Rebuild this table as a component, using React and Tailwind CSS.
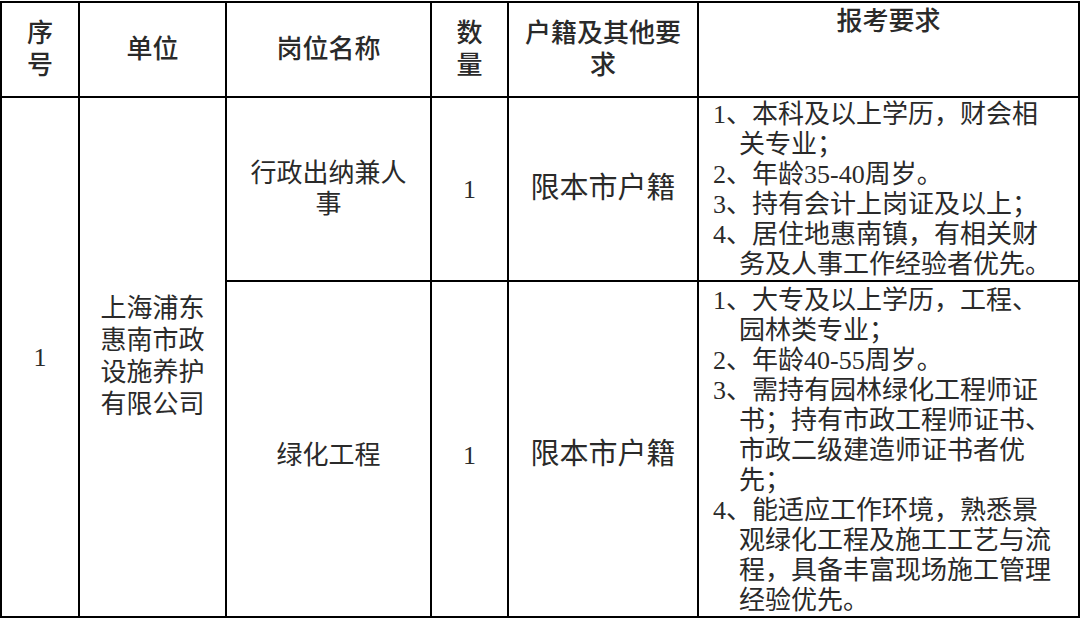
import React from "react";

const req1 = [
  ["1、本科及以上学历，财会相", "关专业；"],
  ["2、年龄35-40周岁。"],
  ["3、持有会计上岗证及以上；"],
  ["4、居住地惠南镇，有相关财", "务及人事工作经验者优先。"],
];

const req2 = [
  ["1、大专及以上学历，工程、", "园林类专业；"],
  ["2、年龄40-55周岁。"],
  ["3、需持有园林绿化工程师证", "书；持有市政工程师证书、", "市政二级建造师证书者优", "先；"],
  ["4、能适应工作环境，熟悉景", "观绿化工程及施工工艺与流", "程，具备丰富现场施工管理", "经验优先。"],
];

// one numbered item, continuation lines hang under the text
const ReqList = ({ items }) => (
  <div className="text-[26px] leading-[30px] text-left">
    {items.map((lines, i) =>
      lines.map((line, j) => (
        <div key={`${i}-${j}`} className={`whitespace-nowrap ${j > 0 ? "pl-[26px]" : ""}`}>
          {line}
        </div>
      ))
    )}
  </div>
);

const cell = "border-2 border-black p-0 text-center align-middle";

export default function App() {
  return (
    <div className="w-[1080px] h-[619px] bg-white pt-[1px] overflow-hidden font-['Liberation_Serif','Noto_Sans_CJK_SC',serif] text-[#2a2a2a]">
      <table className="table-fixed border-collapse w-[1078px]">
        <colgroup>
          <col className="w-[78px]" />
          <col className="w-[147px]" />
          <col className="w-[205px]" />
          <col className="w-[77px]" />
          <col className="w-[190px]" />
          <col className="w-[381px]" />
        </colgroup>
        <thead>
          <tr className="h-[95px] text-[26px] leading-[32px]">
            <th className={`${cell} font-medium`}>序<br />号</th>
            <th className={`${cell} font-medium`}>单位</th>
            <th className={`${cell} font-medium`}>岗位名称</th>
            <th className={`${cell} font-medium`}>数<br />量</th>
            <th className={`${cell} font-medium`}>户籍及其他要<br />求</th>
            <th className={`${cell} font-medium align-top pt-[3px]`}>报考要求</th>
          </tr>
        </thead>
        <tbody>
          <tr className="h-[184px]">
            <td rowSpan={2} className={`${cell} text-[26px]`}>1</td>
            <td rowSpan={2} className={`${cell} text-[26px] leading-[32px]`}>
              上海浦东<br />惠南市政<br />设施养护<br />有限公司
            </td>
            <td className={`${cell} text-[26px] leading-[31px]`}>行政出纳兼人<br />事</td>
            <td className={`${cell} text-[26px]`}>1</td>
            <td className={`${cell} text-[29px]`}>限本市户籍</td>
            <td className={`${cell} align-top pt-[2px] pl-[14px]`}>
              <ReqList items={req1} />
            </td>
          </tr>
          <tr className="h-[336px]">
            <td className={`${cell} text-[26px] pt-[12px]`}>绿化工程</td>
            <td className={`${cell} text-[26px] pt-[12px]`}>1</td>
            <td className={`${cell} text-[29px] pt-[12px]`}>限本市户籍</td>
            <td className={`${cell} align-top pt-[4px] pl-[14px]`}>
              <ReqList items={req2} />
            </td>
          </tr>
        </tbody>
      </table>
    </div>
  );
}
